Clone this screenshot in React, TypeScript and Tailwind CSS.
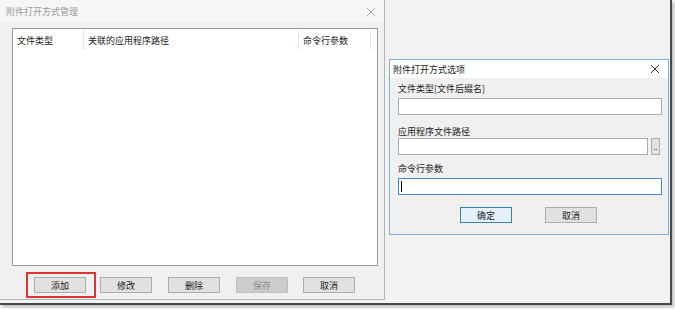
import React from "react";

const font = { fontFamily: '"Noto Sans CJK SC", "Noto Sans", sans-serif' };

function Btn({ label, disabled, focused }: { label: string; disabled?: boolean; focused?: boolean }) {
  return (
    <div
      className={
        "w-[52px] h-[16px] flex items-center justify-center text-[9px] leading-none border " +
        (disabled
          ? "bg-[#cccccc] border-[#bfbfbf] text-[#8a8a8a]"
          : focused
          ? "bg-[#e5f1fb] border-[#3c7fb1] text-[#222]"
          : "bg-[#e1e1e1] border-[#adadad] text-[#222]")
      }
    >
      {label}
    </div>
  );
}

export default function App() {
  return (
    <div className="w-[675px] h-[309px] bg-[#fafafa] overflow-hidden" style={font}>
      <div className="w-[672px] h-[305px] bg-[#f2f2f2] border-r-2 border-b-2 border-[#4a4a4a] shadow-[2px_2px_3px_rgba(0,0,0,0.25)] flex">
        {/* Left dialog */}
        <div className="w-[385px] h-[300px] border-r border-b border-[#b4b4b4] flex flex-col bg-[#f0f0f0]">
          <div className="h-[22px] flex items-center justify-between pl-[6px] pr-[8px] bg-[#f6f6f6]">
            <span className="text-[9px] text-[#9a9a9a] leading-none">附件打开方式管理</span>
            <svg width="10" height="10" viewBox="0 0 10 10" className="mt-[1px]">
              <path d="M1 1 L9 9 M9 1 L1 9" stroke="#aaaaaa" strokeWidth="1" />
            </svg>
          </div>
          <div className="ml-[12px] mt-[6px] w-[366px] h-[238px] bg-white border border-[#9a9a9a]">
            <div className="h-[20px] mt-[1px] flex text-[9px] text-[#222] leading-none">
              <div className="w-[71px] border-r border-[#e5e5e5] flex items-center pl-[4px]">文件类型</div>
              <div className="w-[215px] border-r border-[#e5e5e5] flex items-center pl-[4px]">关联的应用程序路径</div>
              <div className="w-[72px] border-r border-[#e5e5e5] flex items-center pl-[4px]">命令行参数</div>
            </div>
          </div>
          <div className="mt-[11px] ml-[34px] flex">
            <div className="relative">
              <Btn label="添加" />
              <div className="absolute left-[-8px] top-[-5px] w-[70px] h-[26px] border-2 border-[#dd3333]" />
            </div>
            <div className="ml-[14px]"><Btn label="修改" /></div>
            <div className="ml-[16px]"><Btn label="删除" /></div>
            <div className="ml-[16px]"><Btn label="保存" disabled /></div>
            <div className="ml-[15px]"><Btn label="取消" /></div>
          </div>
        </div>
        {/* Right dialog */}
        <div className="ml-[4px] mt-[59px] w-[280px] h-[176px] border border-[#7fb0dc] bg-[#f0f0f0] flex flex-col">
          <div className="h-[18px] bg-white flex items-center justify-between pl-[3px] pr-[8px]">
            <span className="text-[9px] text-[#222] leading-none">附件打开方式选项</span>
            <svg width="10" height="10" viewBox="0 0 10 10">
              <path d="M1 1 L9 9 M9 1 L1 9" stroke="#333" strokeWidth="1" />
            </svg>
          </div>
          <div className="pl-[8px] flex flex-col text-[9px] text-[#222] leading-none">
            <div className="mt-[6px] h-[10px]">文件类型[文件后缀名]</div>
            <div className="mt-[4px] w-[264px] h-[17px] bg-white border border-[#ababab]" />
            <div className="mt-[12px] h-[10px]">应用程序文件路径</div>
            <div className="mt-[1px] flex items-start">
              <div className="w-[250px] h-[17px] bg-white border border-[#ababab]" />
              <div className="ml-[3px] w-[9px] h-[17px] bg-[#e1e1e1] border border-[#adadad] flex items-end justify-center pb-[3px]">
                <span className="text-[7px] leading-none">..</span>
              </div>
            </div>
            <div className="mt-[9px] h-[10px]">命令行参数</div>
            <div className="mt-[4px] w-[264px] h-[17px] bg-white border border-[#3c8ad6] flex items-center pl-[2px]">
              <div className="w-px h-[11px] bg-black" />
            </div>
            <div className="mt-[12px] ml-[62px] flex">
              <Btn label="确定" focused />
              <div className="ml-[33px]"><Btn label="取消" /></div>
            </div>
          </div>
        </div>
      </div>
    </div>
  );
}
